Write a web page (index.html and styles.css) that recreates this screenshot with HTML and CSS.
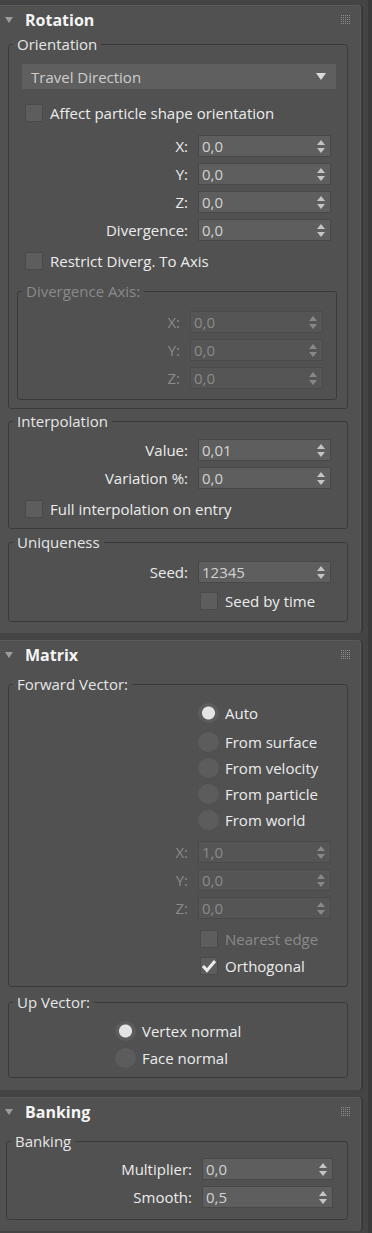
FILE: index.html
```html
<!DOCTYPE html>
<html lang="en">
  <head>
    <meta charset="UTF-8" />
    <meta name="viewport" content="width=device-width, initial-scale=1.0" />
    <title>Rotation / Matrix / Banking</title>
    <link rel="stylesheet" href="styles.css">
  </head>
  <body>
    <div class="rollouts">
      <!-- Rotation rollout -->
      <section class="rollout rotation">
        <header class="rollout-head">
          <svg class="caret" width="8" height="6" viewBox="0 0 8 6"><path d="M0 0H8L4 6Z" /></svg>
          <h2>Rotation</h2>
          <svg class="grip" width="9" height="9" viewBox="0 0 9 9"><path d="M0 0h1v1H0zM2 0h1v1H2zM4 0h1v1H4zM6 0h1v1H6zM8 0h1v1H8zM0 2h1v1H0zM2 2h1v1H2zM4 2h1v1H4zM6 2h1v1H6zM8 2h1v1H8zM0 4h1v1H0zM2 4h1v1H2zM4 4h1v1H4zM6 4h1v1H6zM8 4h1v1H8zM0 6h1v1H0zM2 6h1v1H2zM4 6h1v1H4zM6 6h1v1H6zM8 6h1v1H8zM0 8h1v1H0zM2 8h1v1H2zM4 8h1v1H4zM6 8h1v1H6zM8 8h1v1H8z" /></svg>
        </header>

        <fieldset class="group group-first">
          <legend>Orientation</legend>
          <div class="dropdown">
            <span>Travel Direction</span>
            <svg width="10" height="7" viewBox="0 0 10 7"><path d="M0 0H10L5 7Z" /></svg>
          </div>
          <label class="check check-left mt-15"><span class="box"></span>Affect particle shape orientation</label>
          <div class="field mt-13"><span class="lbl">X:</span><div class="spin"><span>0,0</span><svg width="8" height="13" viewBox="0 0 8 13"><path d="M4 0L8 5H0ZM0 8H8L4 13Z" /></svg></div></div>
          <div class="field mt-6"><span class="lbl">Y:</span><div class="spin"><span>0,0</span><svg width="8" height="13" viewBox="0 0 8 13"><path d="M4 0L8 5H0ZM0 8H8L4 13Z" /></svg></div></div>
          <div class="field mt-6"><span class="lbl">Z:</span><div class="spin"><span>0,0</span><svg width="8" height="13" viewBox="0 0 8 13"><path d="M4 0L8 5H0ZM0 8H8L4 13Z" /></svg></div></div>
          <div class="field mt-6"><span class="lbl">Divergence:</span><div class="spin"><span>0,0</span><svg width="8" height="13" viewBox="0 0 8 13"><path d="M4 0L8 5H0ZM0 8H8L4 13Z" /></svg></div></div>
          <label class="check check-left mt-11"><span class="box"></span>Restrict Diverg. To Axis</label>

          <fieldset class="group group-inner disabled">
            <legend>Divergence Axis:</legend>
            <div class="field mt-10"><span class="lbl">X:</span><div class="spin"><span>0,0</span><svg width="8" height="13" viewBox="0 0 8 13"><path d="M4 0L8 5H0ZM0 8H8L4 13Z" /></svg></div></div>
            <div class="field mt-6"><span class="lbl">Y:</span><div class="spin"><span>0,0</span><svg width="8" height="13" viewBox="0 0 8 13"><path d="M4 0L8 5H0ZM0 8H8L4 13Z" /></svg></div></div>
            <div class="field mt-6"><span class="lbl">Z:</span><div class="spin"><span>0,0</span><svg width="8" height="13" viewBox="0 0 8 13"><path d="M4 0L8 5H0ZM0 8H8L4 13Z" /></svg></div></div>
          </fieldset>
        </fieldset>

        <fieldset class="group interp">
          <legend>Interpolation</legend>
          <div class="field mt-8"><span class="lbl">Value:</span><div class="spin"><span>0,01</span><svg width="8" height="13" viewBox="0 0 8 13"><path d="M4 0L8 5H0ZM0 8H8L4 13Z" /></svg></div></div>
          <div class="field mt-6"><span class="lbl">Variation %:</span><div class="spin"><span>0,0</span><svg width="8" height="13" viewBox="0 0 8 13"><path d="M4 0L8 5H0ZM0 8H8L4 13Z" /></svg></div></div>
          <label class="check check-left mt-11"><span class="box"></span>Full interpolation on entry</label>
        </fieldset>

        <fieldset class="group unique">
          <legend>Uniqueness</legend>
          <div class="field mt-9"><span class="lbl">Seed:</span><div class="spin"><span>12345</span><svg width="8" height="13" viewBox="0 0 8 13"><path d="M4 0L8 5H0ZM0 8H8L4 13Z" /></svg></div></div>
          <label class="check check-right mt-9"><span class="box"></span>Seed by time</label>
        </fieldset>
      </section>

      <!-- Matrix rollout -->
      <section class="rollout matrix">
        <header class="rollout-head">
          <svg class="caret" width="8" height="6" viewBox="0 0 8 6"><path d="M0 0H8L4 6Z" /></svg>
          <h2>Matrix</h2>
          <svg class="grip" width="9" height="9" viewBox="0 0 9 9"><path d="M0 0h1v1H0zM2 0h1v1H2zM4 0h1v1H4zM6 0h1v1H6zM8 0h1v1H8zM0 2h1v1H0zM2 2h1v1H2zM4 2h1v1H4zM6 2h1v1H6zM8 2h1v1H8zM0 4h1v1H0zM2 4h1v1H2zM4 4h1v1H4zM6 4h1v1H6zM8 4h1v1H8zM0 6h1v1H0zM2 6h1v1H2zM4 6h1v1H4zM6 6h1v1H6zM8 6h1v1H8zM0 8h1v1H0zM2 8h1v1H2zM4 8h1v1H4zM6 8h1v1H6zM8 8h1v1H8z" /></svg>
        </header>

        <fieldset class="group group-next forward">
          <legend>Forward Vector:</legend>
          <label class="radio radio-right mt-9"><span class="dot on"></span>Auto</label>
          <label class="radio radio-right mt-9"><span class="dot"></span>From surface</label>
          <label class="radio radio-right mt-6"><span class="dot"></span>From velocity</label>
          <label class="radio radio-right mt-6"><span class="dot"></span>From particle</label>
          <label class="radio radio-right mt-6"><span class="dot"></span>From world</label>
          <div class="field disabled mt-11"><span class="lbl">X:</span><div class="spin"><span>1,0</span><svg width="8" height="13" viewBox="0 0 8 13"><path d="M4 0L8 5H0ZM0 8H8L4 13Z" /></svg></div></div>
          <div class="field disabled mt-6"><span class="lbl">Y:</span><div class="spin"><span>0,0</span><svg width="8" height="13" viewBox="0 0 8 13"><path d="M4 0L8 5H0ZM0 8H8L4 13Z" /></svg></div></div>
          <div class="field disabled mt-6"><span class="lbl">Z:</span><div class="spin"><span>0,0</span><svg width="8" height="13" viewBox="0 0 8 13"><path d="M4 0L8 5H0ZM0 8H8L4 13Z" /></svg></div></div>
          <label class="check check-right disabled mt-11"><span class="box"></span>Nearest edge</label>
          <label class="check check-right mt-9"><span class="box"><svg width="18" height="18" viewBox="0 0 18 18"><path d="M3 9L7 13.5L15 4" /></svg></span>Orthogonal</label>
        </fieldset>

        <fieldset class="group up">
          <legend>Up Vector:</legend>
          <label class="radio radio-mid mt-9"><span class="dot on"></span>Vertex normal</label>
          <label class="radio radio-mid mt-7"><span class="dot"></span>Face normal</label>
        </fieldset>
      </section>

      <!-- Banking rollout -->
      <section class="rollout banking">
        <header class="rollout-head">
          <svg class="caret" width="8" height="6" viewBox="0 0 8 6"><path d="M0 0H8L4 6Z" /></svg>
          <h2>Banking</h2>
          <svg class="grip" width="9" height="9" viewBox="0 0 9 9"><path d="M0 0h1v1H0zM2 0h1v1H2zM4 0h1v1H4zM6 0h1v1H6zM8 0h1v1H8zM0 2h1v1H0zM2 2h1v1H2zM4 2h1v1H4zM6 2h1v1H6zM8 2h1v1H8zM0 4h1v1H0zM2 4h1v1H2zM4 4h1v1H4zM6 4h1v1H6zM8 4h1v1H8zM0 6h1v1H0zM2 6h1v1H2zM4 6h1v1H4zM6 6h1v1H6zM8 6h1v1H8zM0 8h1v1H0zM2 8h1v1H2zM4 8h1v1H4zM6 8h1v1H6zM8 8h1v1H8z" /></svg>
        </header>

        <fieldset class="group group-next bank">
          <legend>Banking</legend>
          <div class="field mt-7"><span class="lbl">Multiplier:</span><div class="spin"><span>0,0</span><svg width="8" height="13" viewBox="0 0 8 13"><path d="M4 0L8 5H0ZM0 8H8L4 13Z" /></svg></div></div>
          <div class="field mt-6"><span class="lbl">Smooth:</span><div class="spin"><span>0,5</span><svg width="8" height="13" viewBox="0 0 8 13"><path d="M4 0L8 5H0ZM0 8H8L4 13Z" /></svg></div></div>
        </fieldset>
      </section>
    </div>
    <div class="track"></div>
  </body>
</html>
```

FILE: styles.css
```css
* {
  box-sizing: border-box;
  margin: 0;
  padding: 0;
}
body {
  background: #444444;
  color: #ececec;
  font-family: "Open Sans", "Noto Sans", sans-serif;
  font-size: 15px;
  display: flex;
  height: 1233px;
  overflow: hidden;
}
.rollouts {
  width: 361px;
  display: flex;
  flex-direction: column;
  gap: 7px;
  padding-top: 5px;
}
.track {
  width: 4px;
  margin-left: auto;
  background: #3a3a3a;
}

/* rollout panel */
.rollout {
  background: #515151;
  border-radius: 0 4px 4px 0;
  box-shadow: inset 0 1px 0 #5a5a5a, inset -1px 0 0 #5a5a5a, 2px 0 0 #393939;
}
.rotation {
  padding-bottom: 11px;
}
.matrix {
  padding-bottom: 12px;
}
.banking {
  padding-bottom: 11px;
}
.rollout-head {
  height: 29px;
  display: flex;
  align-items: center;
  padding: 0 11px 0 5px;
}
.caret {
  fill: #9c9c9c;
}
.rollout-head h2 {
  font-size: 16px;
  font-weight: 700;
  color: #f4f4f4;
  margin-left: 12px;
}
.grip {
  margin-left: auto;
  fill: #8e8e8e;
}

/* group boxes */
.group {
  border: 1px solid #3a3a3a;
  border-radius: 3px;
  margin: 0 13px 0 8px;
  min-inline-size: 0;
  display: flex;
  flex-direction: column;
}
.group legend {
  line-height: 20px;
  padding: 0 4px;
  margin-left: 4px;
  color: #e6e6e6;
}
.group-first {
  padding-bottom: 8px;
}
.group-next {
  margin-top: 5px;
}
.group-inner {
  margin: 11px 10px 0 8px;
  padding-bottom: 10px;
}
.group-inner .field {
  padding-right: 13px;
}
.interp {
  margin-top: 2px;
  padding-bottom: 10px;
}
.unique {
  margin-top: 3px;
  padding-bottom: 11px;
}
.forward {
  padding-bottom: 11px;
}
.up {
  margin-top: 5px;
  padding-bottom: 9px;
}
.bank {
  margin: 5px 13px 0 6px;
  padding-bottom: 11px;
}
.bank .field {
  padding-right: 14px;
}
.bank .spin {
  width: 131px;
}

/* dropdown */
.dropdown {
  height: 25px;
  margin: 10px 11px 0 13px;
  background: #5f5f5f;
  display: flex;
  align-items: center;
  justify-content: space-between;
  padding: 0 10px 0 9px;
  color: #cdcdcd;
}
.dropdown svg {
  fill: #dcdcdc;
}

/* spinner rows */
.field {
  display: flex;
  justify-content: flex-end;
  align-items: center;
  gap: 10px;
  padding-right: 16px;
}
.spin {
  width: 133px;
  height: 22px;
  background: #5e5e5e;
  border: 1px solid #484848;
  display: flex;
  align-items: center;
  justify-content: space-between;
  padding: 0 5px 0 3px;
  color: #d2d2d2;
}
.spin svg {
  fill: #c4c4c4;
}
.disabled .lbl,
.disabled legend,
.disabled .spin,
.check.disabled {
  color: #8a8a8a;
}
.disabled .spin {
  background: #555555;
  border-color: #4a4a4a;
}
.disabled .spin svg {
  fill: #888888;
}

/* checkboxes */
.check {
  display: flex;
  align-items: center;
  gap: 7px;
  height: 18px;
}
.check-left {
  margin-left: 16px;
}
.check-right {
  margin-left: 191px;
}
.box {
  width: 18px;
  height: 18px;
  flex: none;
  background: #5d5d5d;
  border: 1px solid #4a4a4a;
  display: flex;
}
.box svg {
  margin: -1px;
  fill: none;
  stroke: #ececec;
  stroke-width: 3;
}

/* radios */
.radio {
  display: flex;
  align-items: center;
  gap: 6px;
  height: 20px;
}
.radio-right {
  margin-left: 189px;
}
.radio-mid {
  margin-left: 106px;
}
.dot {
  width: 21px;
  height: 20px;
  border-radius: 50%;
  background: #5c5c5c;
  flex: none;
}
.dot.on {
  background: radial-gradient(circle, #e4e4e4 6px, #5c5c5c 7px);
}

.mt-6 { margin-top: 6px; }
.mt-7 { margin-top: 7px; }
.mt-8 { margin-top: 8px; }
.mt-9 { margin-top: 9px; }
.mt-10 { margin-top: 10px; }
.mt-11 { margin-top: 11px; }
.mt-13 { margin-top: 13px; }
.mt-15 { margin-top: 15px; }
```
